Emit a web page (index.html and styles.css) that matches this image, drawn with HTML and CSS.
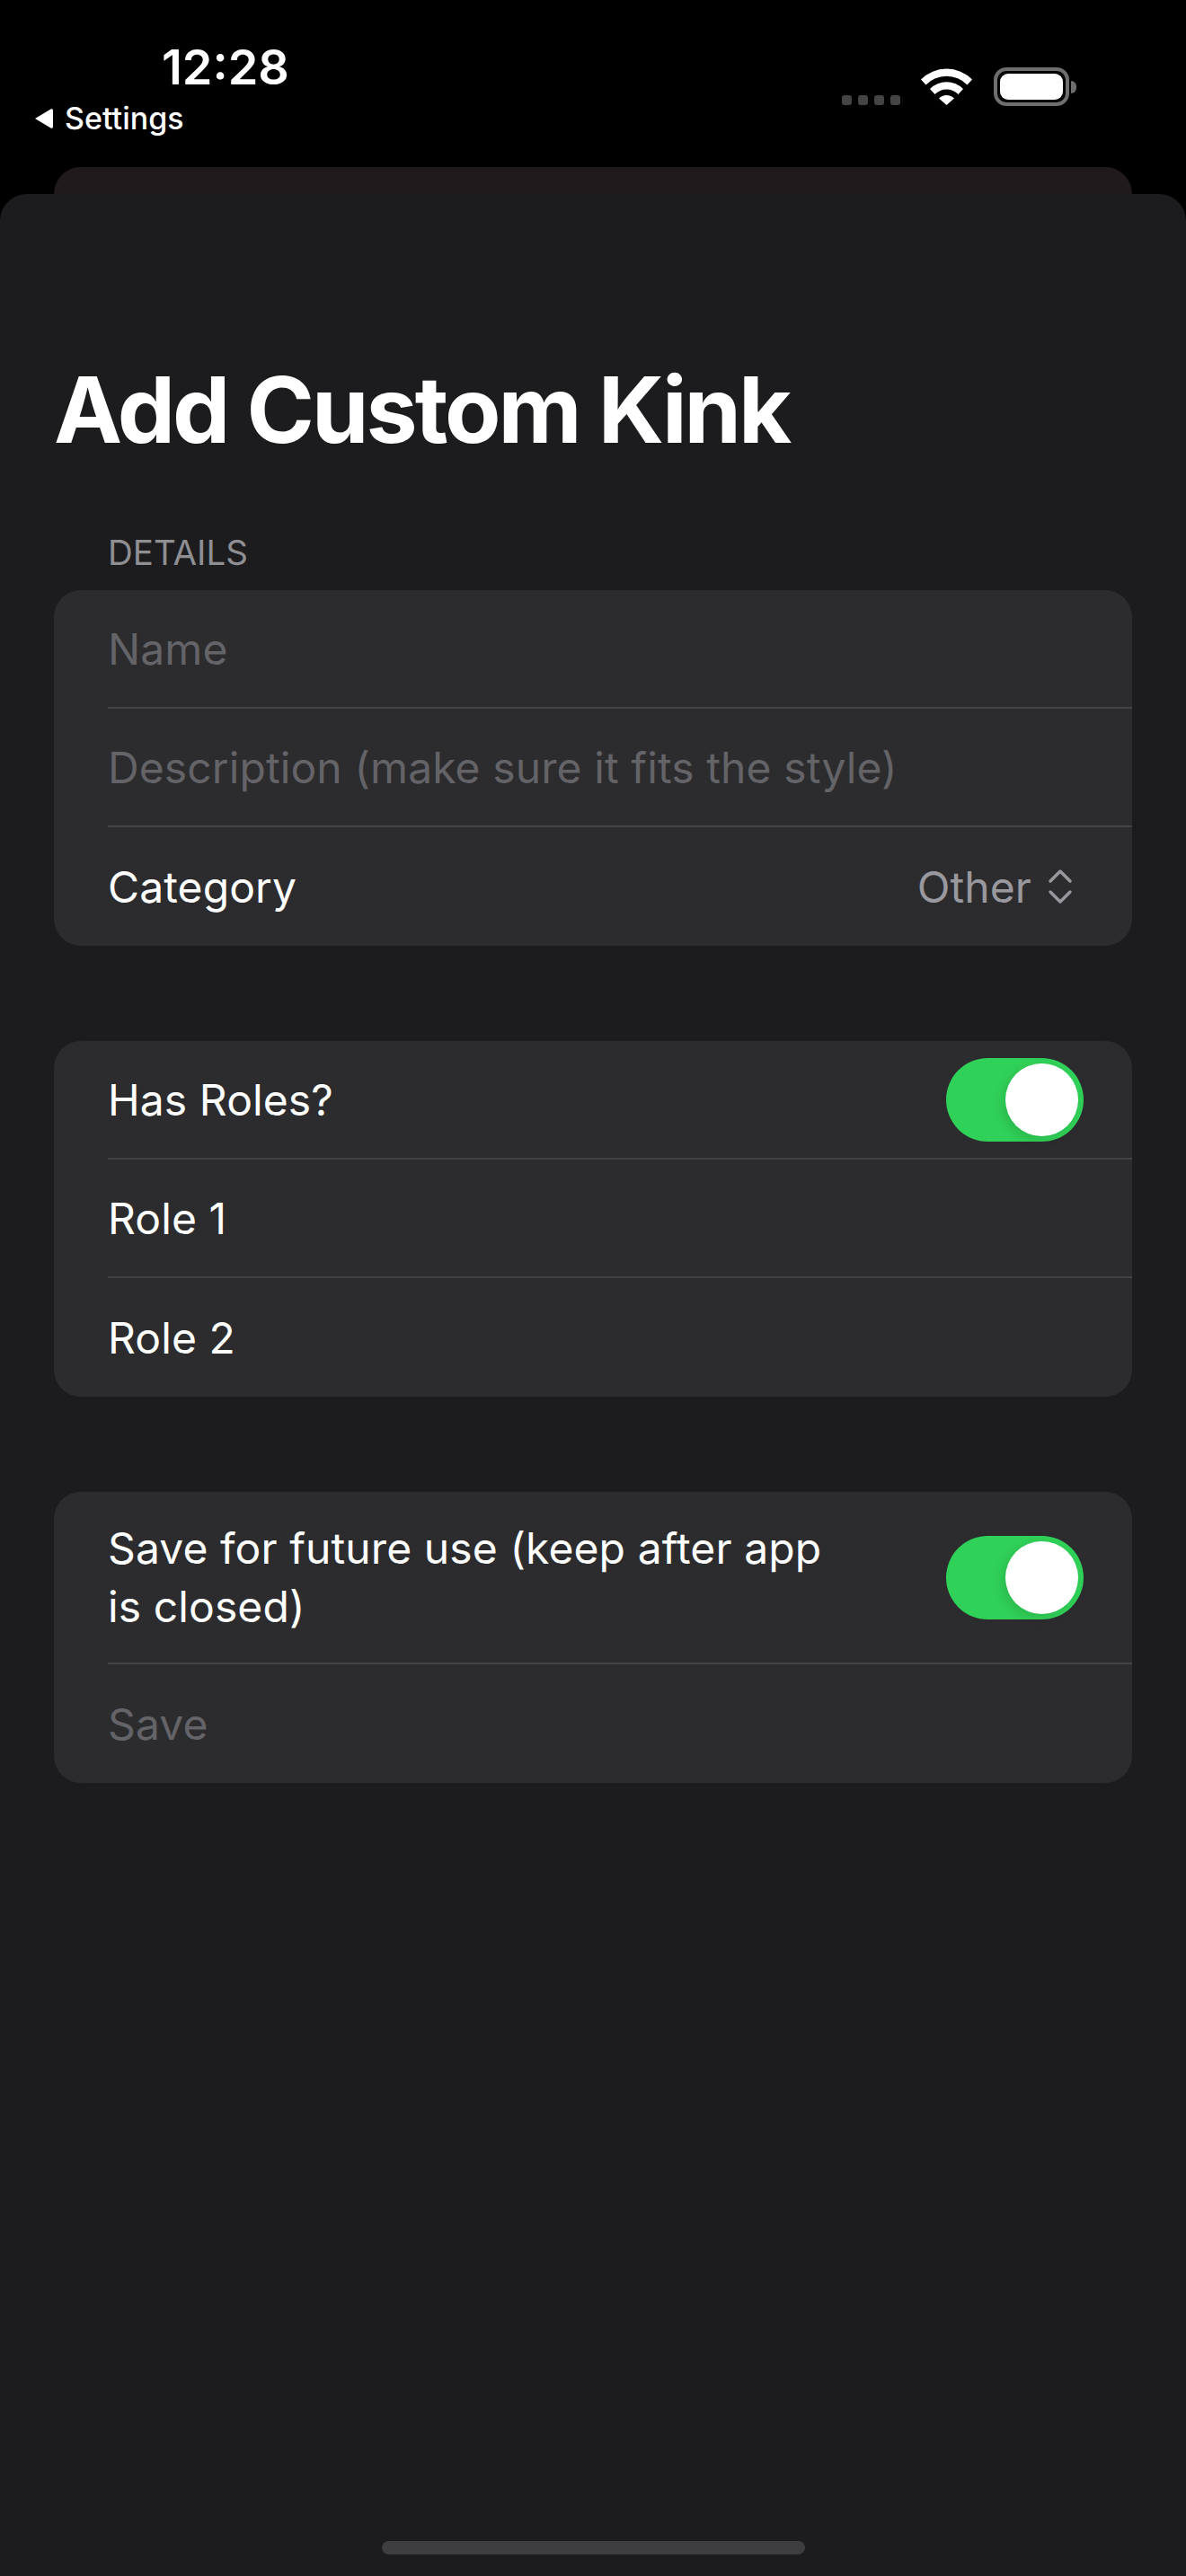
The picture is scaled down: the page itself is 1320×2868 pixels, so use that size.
FILE: index.html
```html
<!DOCTYPE html>
<html lang="en">
<head>
    <meta charset="UTF-8">
    <meta name="viewport" content="width=device-width, initial-scale=1.0">
    <title>Add Custom Kink</title>
    <link rel="stylesheet" href="styles.css">
</head>
<body>
    <header class="status-bar">
        <div class="status-left">
            <div class="time">12:28</div>
            <div class="back">
                <svg class="back-arrow" width="21" height="24" viewBox="0 0 21 24"><path d="M1 12 L18.500 1.500 Q21 0.500 21 3 V21 Q21 23.500 18.500 22.500 Z" fill="#fff"/></svg>
                <span>Settings</span>
            </div>
        </div>
        <div class="status-right">
            <div class="signal"><i></i><i></i><i></i><i></i></div>
            <svg class="wifi" width="57" height="42" viewBox="0 0 57 42">
                <path d="M0 13.5 A40 40 0 0 1 57 13.5 L51.5 19.5 A32 32 0 0 0 5.500 19.5 Z" fill="#fff"/>
                <path d="M10 24 A26 26 0 0 1 47 24 L41.500 30 A18 18 0 0 0 15.500 30 Z" fill="#fff"/>
                <path d="M20 34.500 A12 12 0 0 1 37 34.500 L28.500 42 Z" fill="#fff"/>
            </svg>
            <div class="battery">
                <div class="battery-body"><div class="battery-fill"></div></div>
                <div class="battery-nib"></div>
            </div>
        </div>
    </header>

    <div class="peek-card"></div>

    <main class="sheet">
        <h1>Add Custom Kink</h1>

        <div class="section-label">DETAILS</div>
        <section class="group">
            <div class="row"><span class="placeholder">Name</span></div>
            <div class="row"><span class="placeholder">Description (make sure it fits the style)</span></div>
            <div class="row">
                <span>Category</span>
                <span class="picker">
                    <span>Other</span>
                    <svg width="28" height="40" viewBox="0 0 28 40" fill="none" stroke="#98989e" stroke-width="3.500" stroke-linecap="round" stroke-linejoin="round"><path d="M3 14 L14 3 L25 14"/><path d="M3 26 L14 37 L25 26"/></svg>
                </span>
            </div>
        </section>

        <section class="group">
            <div class="row">
                <span>Has Roles?</span>
                <div class="toggle"><div class="knob"></div></div>
            </div>
            <div class="row"><span>Role 1</span></div>
            <div class="row"><span>Role 2</span></div>
        </section>

        <section class="group">
            <div class="row row-tall">
                <span class="wrap">Save for future use (keep after app is closed)</span>
                <div class="toggle"><div class="knob"></div></div>
            </div>
            <div class="row"><span class="placeholder">Save</span></div>
        </section>

        <div class="home-indicator"></div>
    </main>
</body>
</html>
```

FILE: styles.css
```css
* {
    box-sizing: border-box;
}
body {
    font-family: Inter, "Liberation Sans", sans-serif;
    margin: 0;
    width: 1320px;
    height: 2868px;
    background: #000;
    color: #fff;
    display: flex;
    flex-direction: column;
    overflow: hidden;
}
.status-bar {
    height: 186px;
    flex: none;
    display: flex;
    justify-content: space-between;
    align-items: flex-start;
    padding: 47px 122px 0 38px;
}
.time {
    font-size: 54px;
    font-weight: 600;
    line-height: 56px;
    margin-left: 142px;
}
.back {
    display: flex;
    align-items: center;
    gap: 13px;
    font-size: 34px;
    font-weight: 500;
    line-height: 40px;
    margin-top: 9px;
}
.status-right {
    display: flex;
    align-items: flex-start;
    padding-top: 28px;
}
.signal {
    display: flex;
    gap: 7px;
    margin-top: 31px;
    margin-right: 23px;
}
.signal i {
    width: 11px;
    height: 11px;
    border-radius: 3px;
    background: #444;
}
.wifi {
    margin-right: 24px;
}
.battery {
    display: flex;
    align-items: center;
}
.battery-body {
    width: 84px;
    height: 43px;
    border: 4px solid #6e6e6e;
    border-radius: 14px;
    padding: 3px;
}
.battery-fill {
    width: 100%;
    height: 100%;
    background: #fff;
    border-radius: 9px;
}
.battery-nib {
    width: 6px;
    height: 14px;
    margin-left: 2px;
    background: #6e6e6e;
    border-radius: 0 6px 6px 0;
}
.peek-card {
    height: 30px;
    flex: none;
    margin: 0 60px;
    background: #211a1c;
    border-radius: 30px 30px 0 0;
}
.sheet {
    flex: 1;
    display: flex;
    flex-direction: column;
    background: #1c1c1e;
    border-radius: 30px 30px 0 0;
    padding: 0 60px;
}
h1 {
    font-size: 102px;
    font-weight: 700;
    line-height: 124px;
    letter-spacing: -3px;
    margin: 178px 0 0;
}
.section-label {
    font-size: 38.5px;
    line-height: 46px;
    color: #8e8e93;
    margin: 74px 0 0 60px;
}
.group {
    background: #2c2c2e;
    border-radius: 30px;
    margin-top: 106px;
}
.section-label + .group {
    margin-top: 19px;
}
.row {
    height: 132px;
    display: flex;
    align-items: center;
    justify-content: space-between;
    margin-left: 60px;
    padding-right: 54px;
    font-size: 48px;
    letter-spacing: 0.1px;
    border-bottom: 2px solid #434346;
}
.row:last-child {
    border-bottom: none;
}
.row-tall {
    height: 192px;
}
.wrap {
    width: 810px;
    line-height: 65px;
}
.placeholder {
    color: #636368;
}
.picker {
    display: flex;
    align-items: center;
    gap: 18px;
    color: #98989e;
    margin-right: 12px;
}
.toggle {
    width: 153px;
    height: 93px;
    border-radius: 47px;
    background: #30d158;
    display: flex;
    justify-content: flex-end;
    align-items: center;
    padding-right: 6px;
}
.knob {
    width: 81px;
    height: 81px;
    border-radius: 50%;
    background: #fff;
    box-shadow: -4px 4px 12px rgba(0, 0, 0, 0.12);
}
.home-indicator {
    width: 471px;
    height: 15px;
    border-radius: 8px;
    background: #3e3e40;
    margin: auto auto 24px;
    flex: none;
}
```
